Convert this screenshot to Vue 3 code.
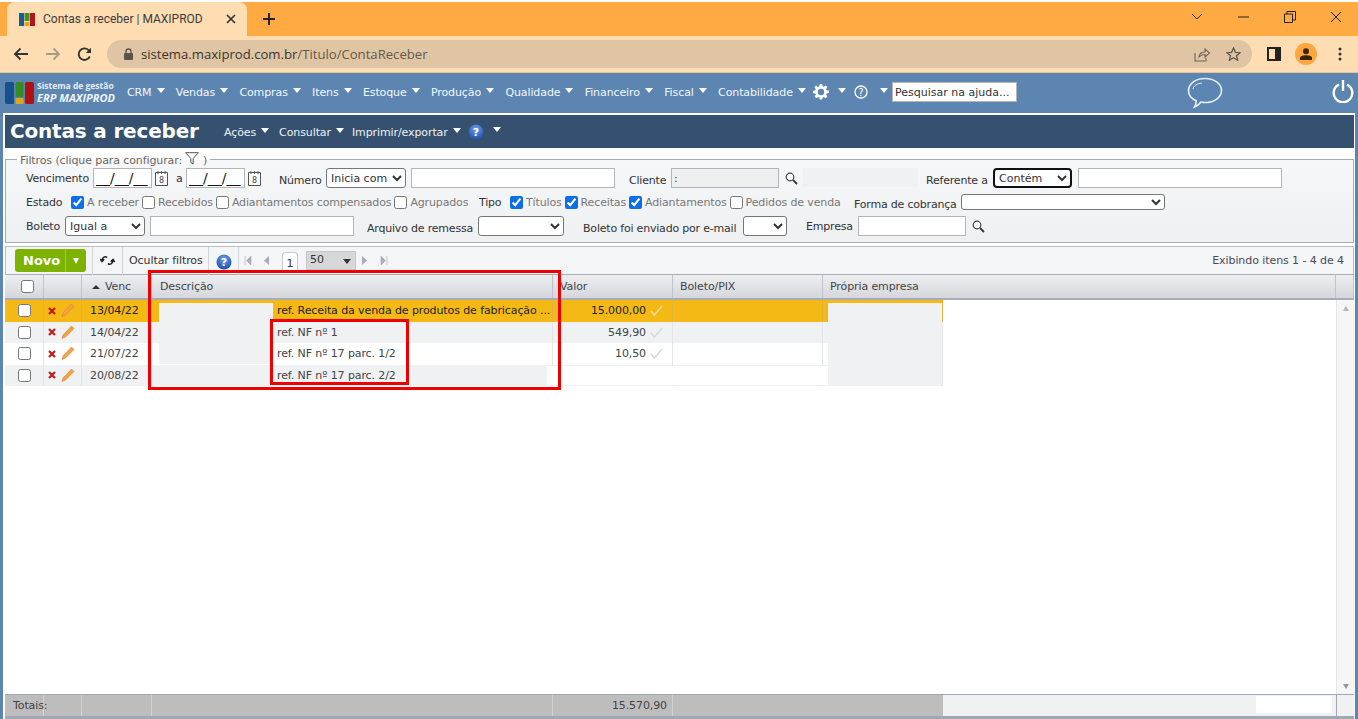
<script setup>
const menus = ['CRM', 'Vendas', 'Compras', 'Itens', 'Estoque', 'Produção', 'Qualidade', 'Financeiro', 'Fiscal', 'Contabilidade']
const rows = [
  { venc: '13/04/22', desc: 'ref. Receita da venda de produtos de fabricação ...', valor: '15.000,00', active: true },
  { venc: '14/04/22', desc: 'ref. NF nº 1', valor: '549,90', alt: true },
  { venc: '21/07/22', desc: 'ref. NF nº 17 parc. 1/2', valor: '10,50' },
  { venc: '20/08/22', desc: 'ref. NF nº 17 parc. 2/2', valor: '', alt: true }
]
const estado = [
  { label: 'A receber', on: true }, { label: 'Recebidos' },
  { label: 'Adiantamentos compensados' }, { label: 'Agrupados' }
]
const tipo = [
  { label: 'Títulos', on: true }, { label: 'Receitas', on: true },
  { label: 'Adiantamentos', on: true }, { label: 'Pedidos de venda' }
]
</script>

<template>
  <div class="page">
    <div class="tabstrip">
      <div class="tab">
        <svg class="favicon" width="16" height="13" viewBox="0 0 16 13">
          <rect x="0" y="0" width="5" height="13" fill="#1a5a9c" /><rect x="5.500" y="0" width="5" height="8" fill="#3f8f2a" />
          <rect x="5.500" y="9" width="5" height="4" fill="#e0a820" /><rect x="11" y="0" width="5" height="13" fill="#b01818" />
        </svg>
        <span class="tab-title">Contas a receber | MAXIPROD</span>
        <svg class="tab-x" width="10" height="10" viewBox="0 0 10 10"><path d="M1 1l8 8M9 1l-8 8" stroke="#333" stroke-width="1.700" /></svg>
      </div>
      <svg class="newtab" width="14" height="14" viewBox="0 0 14 14"><path d="M7 1v12M1 7h12" stroke="#222" stroke-width="2" /></svg>
      <div class="winctl">
        <svg width="12" height="8" viewBox="0 0 12 8"><path d="M1 1l5 5 5-5" fill="none" stroke="#333" /></svg>
        <svg width="11" height="2" viewBox="0 0 11 2"><path d="M0 1h11" stroke="#222" /></svg>
        <svg width="12" height="12" viewBox="0 0 12 12"><path d="M.5 3h8v8.500h-8zM3 3V.5h8.500V9H8.500" fill="none" stroke="#222" /></svg>
        <svg width="12" height="12" viewBox="0 0 12 12"><path d="M1 1l10 10M11 1L1 11" stroke="#222" /></svg>
      </div>
    </div>

    <div class="toolbar-chrome">
      <svg class="nav" width="16" height="14" viewBox="0 0 16 14"><path d="M15 7H2M7.500 1.500L2 7l5.500 5.500" fill="none" stroke="#333" stroke-width="1.800" /></svg>
      <svg class="nav" width="16" height="14" viewBox="0 0 16 14"><path d="M1 7h13M8.500 1.500L14 7l-5.500 5.500" fill="none" stroke="#a89a88" stroke-width="1.800" /></svg>
      <svg class="nav" width="15" height="15" viewBox="0 0 15 15"><path d="M12.800 9.500A5.800 5.800 0 1 1 12 3.500" fill="none" stroke="#333" stroke-width="1.900" /><path d="M14 .8v5.200H8.800z" fill="#333" /></svg>
      <div class="omnibox">
        <svg width="9" height="12" viewBox="0 0 9 12"><path d="M2 5V3.500a2.500 2.500 0 0 1 5 0V5" fill="none" stroke="#5c5248" stroke-width="1.300" /><rect y="5" width="9" height="7" rx="1" fill="#5c5248" /></svg>
        <span class="url"><span class="host">sistema.maxiprod.com.br</span>/Titulo/ContaReceber</span>
        <svg class="om-share" width="16" height="15" viewBox="0 0 16 15"><path d="M1 6v8h11v-3M5 10c.5-3.500 3-5 6-5V2l4.500 4L11 10V7.500c-2.500 0-4.500.8-6 2.500z" fill="none" stroke="#6b6259" stroke-width="1.100" /></svg>
        <svg class="om-star" width="15" height="14" viewBox="0 0 15 14"><path d="M7.500 1l1.900 4.300 4.600.4-3.500 3 1.100 4.500-4.100-2.400-4.100 2.400 1.100-4.500-3.500-3 4.600-.4z" fill="none" stroke="#5f574e" stroke-width="1.300" /></svg>
      </div>
      <svg class="panel" width="14" height="14" viewBox="0 0 14 14"><path d="M0 0h14v14H0z" fill="#222" /><path d="M2 2h6v10H2z" fill="#ffddb3" /></svg>
      <div class="avatar"><svg width="12" height="12" viewBox="0 0 12 12"><circle cx="6" cy="3.300" r="3" fill="#3a2408" /><path d="M0 12V9.800C0 8 3 7.200 6 7.200s6 .8 6 2.600V12z" fill="#3a2408" /></svg></div>
      <svg class="dots" width="4" height="14" viewBox="0 0 4 14"><circle cx="2" cy="2" r="1.500" fill="#333" /><circle cx="2" cy="7" r="1.500" fill="#333" /><circle cx="2" cy="12" r="1.500" fill="#333" /></svg>
    </div>

    <header class="appbar">
      <svg class="logo" width="30" height="23" viewBox="0 0 30 23">
        <rect x="0" y="0" width="9" height="22" rx="1.500" fill="#17508c" /><rect x="10.500" y="0" width="8" height="15" rx="1" fill="#358a22" />
        <rect x="10.500" y="16" width="8" height="6" rx="1" fill="#dda520" /><rect x="20" y="0" width="9" height="22" rx="1.500" fill="#b01212" />
      </svg>
      <div class="brand"><div class="b1">Sistema de gestão</div><div class="b2">ERP MAXIPROD</div></div>
      <nav class="menu">
        <span v-for="m in menus" :key="m" class="mitem">{{ m }}<i class="caret"></i></span>
        <svg class="gear" width="16" height="16" viewBox="0 0 16 16"><path d="M6.800 0h2.400l.4 2.200 1.300.5 1.800-1.300 1.700 1.700-1.300 1.800.5 1.300 2.200.4v2.400l-2.200.4-.5 1.300 1.300 1.800-1.700 1.700-1.800-1.300-1.300.5-.4 2.200H6.800l-.4-2.200-1.300-.5-1.800 1.300-1.700-1.700 1.300-1.800-.5-1.300L0 9.200V6.800l2.200-.4.500-1.300L1.400 3.300l1.700-1.700 1.800 1.300 1.300-.5z" fill="#fff" /><circle cx="8" cy="8" r="3.200" fill="#5c86b1" /></svg>
        <i class="caret c-gear"></i>
        <svg class="help-o" width="14" height="14" viewBox="0 0 14 14"><circle cx="7" cy="7" r="6" fill="none" stroke="#fff" stroke-width="1.300" /><text x="7" y="10.500" text-anchor="middle" font-size="10" font-family="DejaVu Sans" fill="#fff">?</text></svg>
        <i class="caret c-help"></i>
        <input class="helpsearch" value="Pesquisar na ajuda..." />
      </nav>
      <svg class="chat" width="36" height="32" viewBox="0 0 36 32"><path d="M18 1.500c9 0 16.500 5.200 16.500 12s-7.500 12-16 12c-1.500 0-3 0-4.500-.5-1.500 2-3.500 4-6.500 5 1.300-2 1.800-4 1.700-6.300C3.800 21.500 1.500 18 1.500 13.500 1.500 6.700 9 1.500 18 1.500z" fill="none" stroke="#e8eef5" stroke-width="1.600" /><path d="M6 12c.7-3.500 4-5.500 9-6" fill="none" stroke="#e8eef5" stroke-width="1" /></svg>
      <svg class="power" width="22" height="24" viewBox="0 0 22 24"><path d="M7 5.500a9.300 9.300 0 1 0 8 0" fill="none" stroke="#fff" stroke-width="2.400" /><path d="M11 1v11" stroke="#fff" stroke-width="2.400" /></svg>
    </header>

    <main class="main">
      <div class="titlebar">
        <h1>Contas a receber</h1>
        <span class="tmenu tm1">Ações<i class="caret"></i></span>
        <span class="tmenu">Consultar<i class="caret"></i></span>
        <span class="tmenu">Imprimir/exportar<i class="caret"></i></span>
        <svg class="help-b" width="16" height="16" viewBox="0 0 16 16"><defs><radialGradient id="hb" cx="50%" cy="30%" r="70%"><stop offset="0" stop-color="#6fa0e8" /><stop offset="1" stop-color="#1c4fb0" /></radialGradient></defs><circle cx="8" cy="8" r="7.500" fill="url(#hb)" /><text x="8" y="12" text-anchor="middle" font-size="11" font-weight="700" font-family="DejaVu Sans" fill="#fff">?</text></svg>
        <i class="caret c-tail"></i>
      </div>

      <fieldset class="filters">
        <legend>Filtros (clique para configurar:
          <svg width="14" height="13" viewBox="0 0 14 13"><path d="M.7.7h12.600L8.200 6.500V12L5.800 10.500v-4z" fill="none" stroke="#555" /></svg> )</legend>
        <div class="frow f1">
          <label>Vencimento</label>
          <input class="w59 date" value="__/__/__" />
          <span class="cal"><svg width="13" height="16" viewBox="0 0 13 16"><path d="M.5 2.500h12v13H.5z" fill="#fff" stroke="#555" /><path d="M3 1v3M6.500 1v3M10 1v3" stroke="#555" /><text x="6.500" y="13" text-anchor="middle" font-size="8" font-family="DejaVu Sans" fill="#444">8</text></svg></span>
          <label>a</label>
          <input class="w59 date" value="__/__/__" />
          <span class="cal"><svg width="13" height="16" viewBox="0 0 13 16"><path d="M.5 2.500h12v13H.5z" fill="#fff" stroke="#555" /><path d="M3 1v3M6.500 1v3M10 1v3" stroke="#555" /><text x="6.500" y="13" text-anchor="middle" font-size="8" font-family="DejaVu Sans" fill="#444">8</text></svg></span>
          <label class="low">Número</label>
          <select class="w80"><option>Inicia com</option></select>
          <input class="w204" />
          <label class="low">Cliente</label>
          <input class="w108 disabled" value=":" />
          <span class="search"><svg width="13" height="13" viewBox="0 0 13 13"><circle cx="5" cy="5" r="3.800" fill="#fff" stroke="#444" stroke-width="1.200" /><path d="M8 8l4 4" stroke="#333" stroke-width="1.800" /></svg></span>
          <label class="low">Referente a</label>
          <select class="w79 focus"><option>Contém</option></select>
          <input class="w204" />
        </div>
        <div class="frow f2">
          <label>Estado</label>
          <span class="checks">
            <span v-for="c in estado" :key="c.label" class="chk"><input type="checkbox" :checked="c.on" />{{ c.label }}</span>
          </span>
          <label>Tipo</label>
          <span class="checks">
            <span v-for="c in tipo" :key="c.label" class="chk"><input type="checkbox" :checked="c.on" />{{ c.label }}</span>
          </span>
          <label class="low">Forma de cobrança</label>
          <select class="w204 short"><option></option></select>
        </div>
        <div class="frow f3">
          <label>Boleto</label>
          <select class="w80"><option>Igual a</option></select>
          <input class="w204" />
          <label class="low">Arquivo de remessa</label>
          <select class="w86"><option></option></select>
          <label class="low">Boleto foi enviado por e-mail</label>
          <select class="w44"><option></option></select>
          <label>Empresa</label>
          <input class="w108" />
          <span class="search"><svg width="13" height="13" viewBox="0 0 13 13"><circle cx="5" cy="5" r="3.800" fill="#fff" stroke="#444" stroke-width="1.200" /><path d="M8 8l4 4" stroke="#333" stroke-width="1.800" /></svg></span>
        </div>
      </fieldset>

      <div class="gridbar">
        <button class="novo"><span>Novo</span><i class="novo-split"><i class="caret small"></i></i></button>
        <span class="sep s1"></span>
        <svg class="refresh" width="15" height="13" viewBox="0 0 15 13"><path d="M7 3.500C5 2 2.500 3 2 6.500M.2 5l1.800 2.500L4.200 5.300M8 9.500c2 1.500 4.500.5 5-3M14.800 8L13 5.500l-2.200 2.200" fill="none" stroke="#222" stroke-width="1.600" /></svg>
        <span class="sep s2"></span>
        <span class="hide">Ocultar filtros</span>
        <span class="sep s3"></span>
        <svg class="help-g" width="16" height="16" viewBox="0 0 16 16"><circle cx="8" cy="8" r="7.500" fill="url(#hb)" /><text x="8" y="12" text-anchor="middle" font-size="11" font-weight="700" font-family="DejaVu Sans" fill="#fff">?</text></svg>
        <span class="sep s4"></span>
        <div class="pager">
          <svg width="8" height="9" viewBox="0 0 8 9"><path d="M1 0v9M7 0v9L2.500 4.500z" fill="#aab" stroke="#aab" stroke-width=".6" /></svg>
          <svg class="p2" width="6" height="9" viewBox="0 0 6 9"><path d="M6 0v9L1 4.500z" fill="#aab" /></svg>
          <span class="pnum">1</span>
          <span class="psize">50<i class="pcaret"></i></span>
          <svg class="p3" width="6" height="9" viewBox="0 0 6 9"><path d="M0 0v9l5-4.500z" fill="#aab" /></svg>
          <svg class="p4" width="8" height="9" viewBox="0 0 8 9"><path d="M7 0v9M1 0v9l4.500-4.500z" fill="#aab" stroke="#aab" stroke-width=".6" /></svg>
        </div>
        <span class="exibindo">Exibindo itens 1 - 4 de 4</span>
      </div>

      <div class="table">
        <div class="thead">
          <div class="th center"><input type="checkbox" /></div>
          <div class="th"></div>
          <div class="th venc"><i class="sort"></i>Venc</div>
          <div class="th th-desc">Descrição</div>
          <div class="th">Valor</div>
          <div class="th">Boleto/PIX</div>
          <div class="th">Própria empresa</div>
          <div class="th"></div>
        </div>
        <div class="tbody">
          <div class="rows">
            <div v-for="r in rows" :key="r.venc" class="tr" :class="{ active: r.active, alt: r.alt }">
              <div class="td center"><input type="checkbox" /></div>
              <div class="td acts">
                <svg width="8" height="8" viewBox="0 0 8 8"><path d="M1 1l6 6M7 1L1 7" stroke="#c01a1a" stroke-width="2.200" /></svg>
                <svg width="14" height="15" viewBox="0 0 14 15"><path d="M10.500 1l2.500 2.500-8.500 8.500L1 13.500 2 10z" fill="#f3a24a" stroke="#d8802a" stroke-width=".6" /></svg>
              </div>
              <div class="td vd">{{ r.venc }}</div>
              <div class="td desc">{{ r.desc }}</div>
              <div class="td val"><span>{{ r.valor }}</span><svg v-if="r.valor" width="13" height="11" viewBox="0 0 13 11"><path d="M1 6l3.500 4L12 1" fill="none" :stroke="r.active ? '#f1dca0' : '#d8d8d8'" stroke-width="1.500" /></svg></div>
              <div class="td"></div>
              <div class="td"></div>
            </div>
          </div>
          <div class="scrollbar">
            <i class="sb-up"></i>
            <i class="sb-down"></i>
          </div>
        </div>
        <div class="tfoot">
          <div class="tf tf-a">Totais:</div>
          <div class="tf"></div>
          <div class="tf"></div>
          <div class="tf"></div>
          <div class="tf tf-e">15.570,90</div>
          <div class="tf tf-f"></div>
          <div class="tf-rest"></div>
          <div class="tf-sb"></div>
        </div>
      </div>

      <div class="patch p-client"></div>
      <div class="patch p-desc"></div>
      <div class="patch p-row4"></div>
      <div class="patch p-emp"></div>
      <div class="patch p-foot"></div>
      <div class="redbox rb-outer"></div>
      <div class="redbox rb-inner"></div>
    </main>
  </div>
</template>

<style>
html, body { margin: 0; padding: 0; background: #fff; overflow: hidden; }
</style>

<style scoped>
.page { width: 1358px; height: 719px; display: flex; flex-direction: column; font-family: "DejaVu Sans", sans-serif; font-size: 11px; color: #333; overflow: hidden; position: relative; }

.tabstrip { height: 34px; margin-top: 2px; background: #ffaa42; display: flex; align-items: center; flex: none; }
.tab { width: 240px; height: 34px; margin-left: 7px; background: #ffddb3; border-radius: 8px 8px 0 0; display: flex; align-items: center; box-sizing: border-box; padding-left: 12px; }
.tab-title { font-family: Roboto, sans-serif; font-size: 12px; color: #3c3c3c; margin-left: 8px; width: 183px; white-space: nowrap; }
.tab-x { flex: none; }
.newtab { margin-left: 15px; }
.winctl { margin-left: auto; display: flex; align-items: center; padding-right: 16px; margin-bottom: 5px; }
.winctl svg:nth-child(1) { margin-right: 35px; }
.winctl svg:nth-child(2) { margin-right: 35px; }
.winctl svg:nth-child(3) { margin-right: 34px; }

.toolbar-chrome { height: 36px; background: #ffddb3; border-bottom: 1px solid #e2c39a; display: flex; align-items: center; flex: none; padding-left: 13px; }
.nav { margin-right: 16px; flex: none; }
.nav:nth-child(3) { margin-right: 15px; }
.omnibox { width: 1145px; height: 28px; background: #dfc5a3; border-radius: 14px; display: flex; align-items: center; padding-left: 17px; box-sizing: border-box; margin-right: 15px; }
.url { font-family: "Open Sans", sans-serif; font-size: 13.130px; margin-left: 8px; color: #66594a; white-space: nowrap; }
.host { color: #3a342c; }
.om-share { margin-left: auto; margin-right: 16px; }
.om-star { margin-right: 11px; }
.panel { margin-right: 14px; }
.avatar { width: 22px; height: 22px; border-radius: 50%; background: #ffa63e; display: flex; align-items: center; justify-content: center; margin-right: 21px; }

.appbar { height: 40px; background: #5c86b1; display: flex; align-items: center; flex: none; position: relative; }
.logo { margin-left: 5px; flex: none; }
.brand { margin-left: 2px; width: 90px; color: #fff; margin-top: -1px; }
.b1 { font-size: 8.500px; font-weight: 700; line-height: 11px; color: #e6edf5; font-family: "Open Sans", sans-serif; white-space: nowrap; }
.b2 { font-size: 11px; font-style: italic; font-weight: 700; line-height: 14px; color: #eef3f8; font-family: "Open Sans", sans-serif; white-space: nowrap; }
.menu { display: flex; align-items: center; color: #fff; margin-top: -2px; }
.mitem { display: inline-flex; align-items: center; white-space: nowrap; margin-right: 11.300px; color: #f3f6fa; font-size: 11px; letter-spacing: -0.100px; }
.caret { display: inline-block; width: 0; height: 0; border-left: 4.500px solid transparent; border-right: 4.500px solid transparent; border-top: 5px solid #fff; margin-left: 5px; position: relative; top: -2px; }
.caret.small { border-left-width: 3px; border-right-width: 3px; border-top-width: 6px; margin: 0; top: 0; }
.gear { margin-left: -4px; }
.c-gear { margin-left: 9px; }
.help-o { margin-left: 8px; }
.c-help { margin-left: 12px; }
.helpsearch { width: 125px; height: 20px; box-sizing: border-box; margin-left: 4px; border: 1px solid #b9c6d4; padding: 0 2px; font: 11px "DejaVu Sans", sans-serif; color: #666; background: #fff; outline: none; letter-spacing: 0; }
.chat { position: absolute; left: 1187px; top: 4px; }
.power { position: absolute; left: 1332px; top: 6px; }

.main { flex: 1; position: relative; background: #fff; border-left: 3px solid #5c86b1; border-right: 3px solid #5c86b1; display: flex; flex-direction: column; min-height: 0; padding: 2px 1px 0 2px; box-sizing: border-box; }
.titlebar { height: 33px; background: #35516f; display: flex; align-items: center; color: #fff; flex: none; box-sizing: border-box; padding-left: 5px; }
h1 { margin: 0; font-size: 20px; line-height: 33px; font-weight: 700; width: 214px; white-space: nowrap; font-family: "DejaVu Sans", sans-serif; letter-spacing: -0.180px; }
.tmenu { display: inline-flex; align-items: center; margin-right: 8px; margin-top: 2px; color: #eef2f6; letter-spacing: -0.100px; white-space: nowrap; }
.tm1 { margin-right: 10px; }
.help-b { margin-left: -1px; }
.c-tail { margin-left: 9px; }

.filters { margin: 4px 0 0; padding: 0 0 0 20px; border: 1px solid #a6acb5; height: 91px; box-sizing: border-box; background: linear-gradient(#f6f7f8, #eff0f2); flex: none; min-width: 0; position: relative; letter-spacing: -0.200px; }
legend { padding: 0 3px; margin-left: -9px; color: #666; font-size: 11px; line-height: 12px; letter-spacing: -0.100px; }
legend svg { vertical-align: -1px; }
.frow { display: grid; align-items: center; white-space: nowrap; }
.f1 { height: 20px; margin-top: 1px; grid-template-columns: 67px 59px 24px 10px 59px 34px 47px 85px 218px 42px 114px 141px 67px 85px 204px; }
.f2 { height: 16px; margin-top: 6px; grid-template-columns: 45px 408px 31px 344px 107px 204px; }
.f3 { height: 20px; margin-top: 6px; grid-template-columns: 39px 85px 217px 111px 105px 160px 63px 52px 114px 20px; }
label { color: #333; }
.low { position: relative; top: 2px; }
input:not([type=checkbox]), select { box-sizing: border-box; height: 20px; background: #fff; border: 1px solid #b5b5b5; font: 11px "DejaVu Sans", sans-serif; color: #333; padding: 0 2px; border-radius: 0; outline: none; }
select { border-color: #767676; border-radius: 3px; padding: 0; }
input.date { color: #111; font-size: 14px; padding: 0 2px; }
.w59 { width: 59px; } .w80 { width: 80px; } .w79 { width: 79px; } .w204 { width: 204px; } .w108 { width: 108px; } .w86 { width: 86px; } .w44 { width: 44px; }
input.disabled { background: #eeefef; }
select.focus { border: 2px solid #111; border-radius: 4px; }
select.short { height: 16px; }
.cal { display: flex; padding-left: 3px; }
.search { display: flex; }
.search svg { display: block; }
.checks { display: flex; }
.chk { display: inline-flex; align-items: center; color: #777; margin-right: 3px; letter-spacing: -0.140px; }
input[type=checkbox] { width: 13px; height: 13px; margin: 0 3px 0 0; accent-color: #0b6fe8; flex: none; }

.gridbar { height: 28px; margin-top: 3px; border: 1px solid #b8bdc4; border-bottom: 0; background: #f4f5f6; display: flex; align-items: center; flex: none; box-sizing: border-box; position: relative; letter-spacing: -0.080px; }
.novo { width: 71px; height: 23px; margin-left: 9px; background: #7db200; border: 0; border-radius: 3px; color: #fff; font: 700 13px "DejaVu Sans", sans-serif; display: flex; align-items: center; padding: 0; flex: none; }
.novo span { width: 51px; text-align: center; text-indent: 3px; }
.novo-split { width: 20px; height: 23px; border-left: 1px solid #a2c94a; display: flex; align-items: center; justify-content: center; }
.sep { width: 1px; height: 28px; background: #d2d5d9; flex: none; }
.s1 { margin-left: 6px; }
.refresh { margin: 0 7px; flex: none; }
.hide { margin-left: 6px; width: 79px; color: #333; white-space: nowrap; }
.help-g { margin: 2px 6px 0 7px; flex: none; }
.pager { display: flex; align-items: center; margin-left: 5px; }
.p2 { margin-left: 11px; }
.pnum { width: 16px; height: 21px; box-sizing: border-box; margin: 3px 0 0 13px; border: 1px solid #c6c9ce; border-bottom: 0; border-radius: 4px 4px 0 0; background: #fff; text-align: center; line-height: 21px; color: #333; }
.psize { width: 50px; height: 19px; margin-left: 8px; background: #d6d7d9; border: 1px solid #c4c6c9; box-sizing: border-box; display: flex; align-items: center; justify-content: space-between; padding: 0 4px 3px 3px; }
.pcaret { width: 0; height: 0; border-left: 4px solid transparent; border-right: 4px solid transparent; border-top: 5px solid #333; margin-top: 4px; }
.p3 { margin-left: 6px; }
.p4 { margin-left: 12px; }
.exibindo { margin-left: auto; margin-right: 9px; color: #4a4a55; }

.table { flex: 1; display: flex; flex-direction: column; min-height: 0; letter-spacing: -0.100px; }
.thead { flex: none; display: grid; grid-template-columns: 39px 38px 70px 401px 120px 150px 513px 1fr; background: linear-gradient(#eceef0, #d5d7dc); border-top: 1px solid #a8aeb7; border-bottom: 2px solid #a5acb8; height: 23px; }
.th { display: flex; align-items: center; padding-left: 7px; border-right: 1px solid #bfc3c9; color: #444; box-sizing: border-box; }
.th-desc { padding-left: 8px; }
.th.center, .td.center { justify-content: center; padding: 0; }
.center input[type=checkbox] { margin: 0; }
.th.center input[type=checkbox] { margin-left: 6px; }
.th.venc { padding-left: 10px; }
.sort { width: 0; height: 0; border-left: 4px solid transparent; border-right: 4px solid transparent; border-bottom: 4px solid #333; margin-right: 5px; }
.tbody { flex: 1; display: flex; min-height: 0; background: #fff; }
.rows { width: 1331px; }
.tr { width: 938px; height: 21.500px; display: grid; grid-template-columns: 39px 38px 70px 401px 120px 150px 120px; background: #fff; }
.tr.alt { background: #f0f1f3; }
.tr.active { background: #f5b915; color: #222; }
.td { display: flex; align-items: center; padding-left: 6px; border-right: 1px solid #e4e5e8; box-sizing: border-box; white-space: nowrap; color: #444; overflow: hidden; }
.active .td { color: #222; border-right-color: #e3b23c; }
.acts { padding-left: 4px; gap: 5px; }
.vd { padding-left: 8px; }
.desc { padding-left: 125px; }
.val { justify-content: flex-end; padding-right: 9px; gap: 4px; }
.val span { white-space: nowrap; }
.scrollbar { width: 18px; background: #f6f6f6; display: flex; flex-direction: column; justify-content: space-between; align-items: center; padding: 6px 0 5px; border-left: 1px solid #e4e5e8; box-sizing: border-box; }
.sb-up { width: 0; height: 0; border-left: 3.500px solid transparent; border-right: 3.500px solid transparent; border-bottom: 5px solid #b5b5b5; }
.sb-down { width: 0; height: 0; border-left: 3.500px solid transparent; border-right: 3.500px solid transparent; border-top: 5px solid #999; }
.tfoot { height: 21px; flex: none; display: grid; grid-template-columns: 39px 38px 70px 401px 120px 270px 1fr 18px; border-top: 1px solid #a0a8b4; border-bottom: 3px solid #a0a8b4; }
.tf { background: #bdbdbd; border-right: 1px solid #d2d2d2; display: flex; align-items: center; white-space: nowrap; color: #444; box-sizing: border-box; }
.tf-a { padding-left: 8px; position: relative; z-index: 1; }
.tf-e { justify-content: flex-end; padding-right: 5px; }
.tf-f { border-right: 0; }
.tf-rest { background: #f0f1f3; }
.tf-sb { background: #f0f1f3; border-left: 1px solid #a0a8b4; }

.patch { position: absolute; }
.p-client { left: 800px; top: 55px; width: 115px; height: 19px; background: #f0f1f3; }
.p-desc { left: 156px; top: 190px; width: 114px; height: 61px; background: #f0f1f3; }
.p-row4 { left: 544px; top: 253px; width: 281px; height: 19px; background: #fff; }
.p-emp { left: 825px; top: 190px; width: 114px; height: 81px; background: #f0f1f3; }
.p-foot { left: 1253px; top: 583px; width: 76px; height: 17px; background: #fff; }
.redbox { position: absolute; border: 3px solid #ee0000; box-sizing: border-box; pointer-events: none; }
.rb-outer { left: 145px; top: 157px; width: 413px; height: 120px; }
.rb-inner { left: 267px; top: 206px; width: 139px; height: 66px; }
</style>
